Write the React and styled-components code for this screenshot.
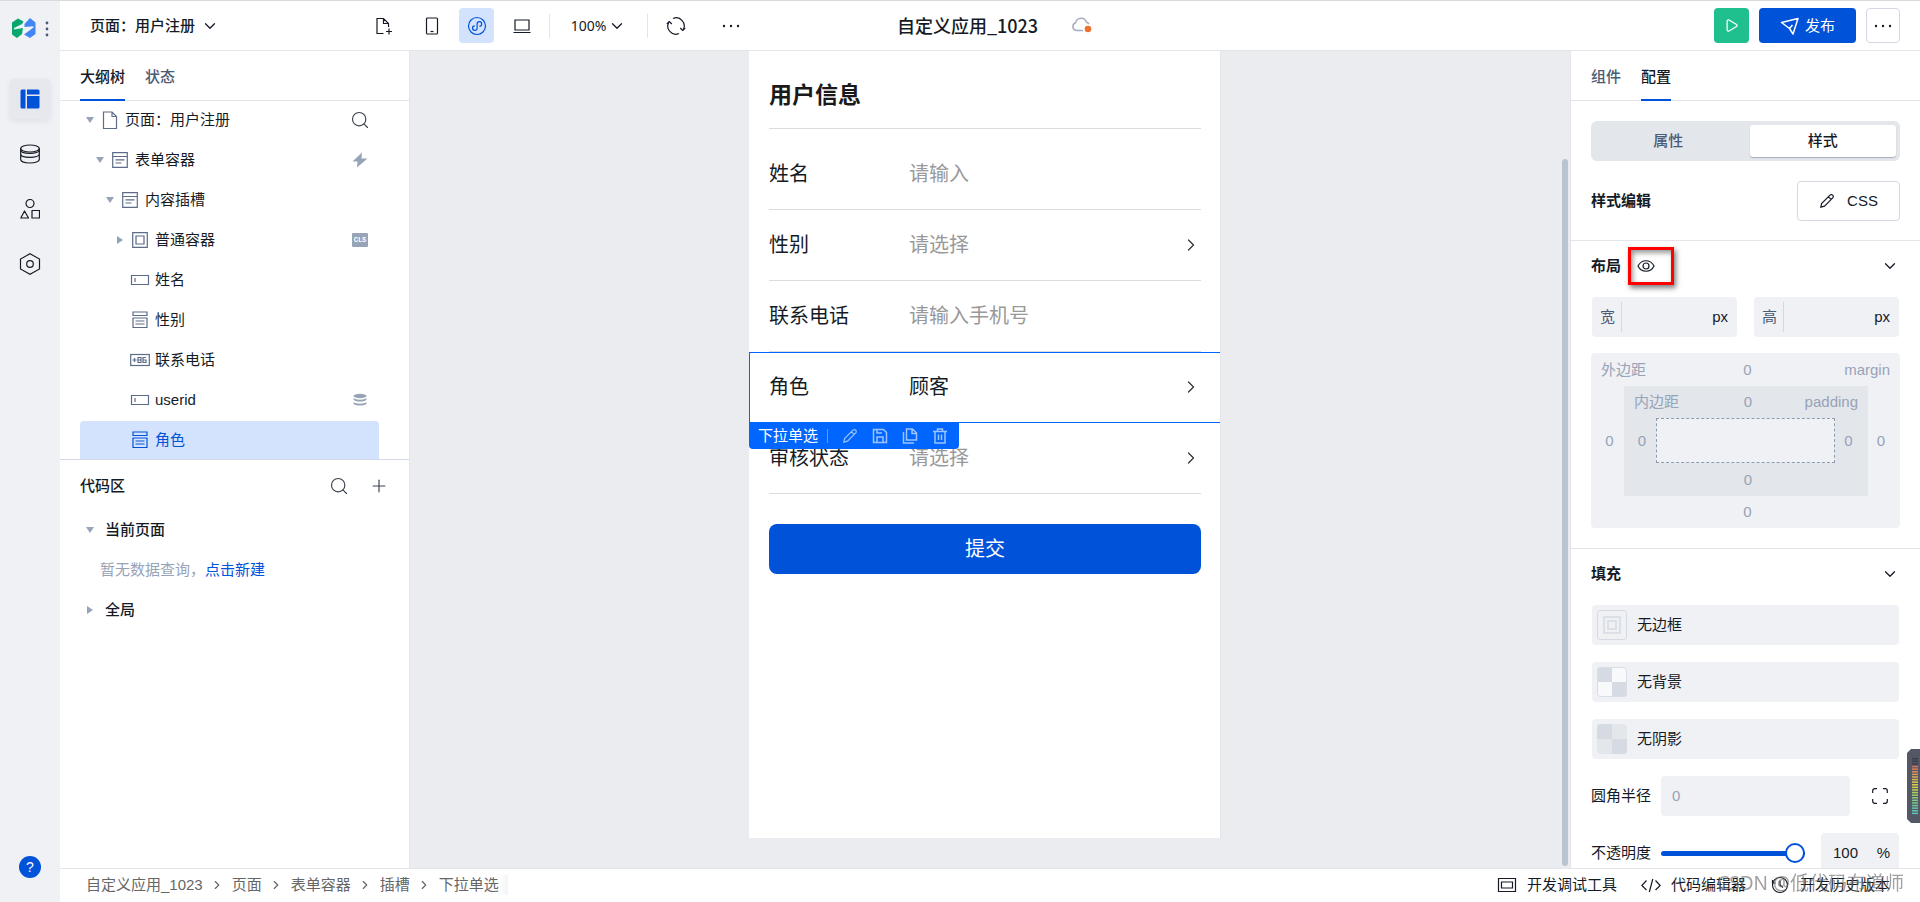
import styled, { createGlobalStyle, css } from 'styled-components';
import { ChevronDown, ChevronRight, Search, Plus, Play } from 'lucide-react';

const GlobalStyle = createGlobalStyle`
  * { box-sizing: border-box; }
  body {
    margin: 0;
    color: #151b26;
    background: #fff;
    font: 15px/20px "Liberation Sans", "Noto Sans CJK SC", sans-serif;
  }
  button, input, select { font: inherit; color: inherit; }
  button { padding: 0; border: 0; background: none; cursor: pointer; }
  ul, ol { margin: 0; padding: 0; list-style: none; }
  h1, h2, h3 { margin: 0; font-size: inherit; }
  a { color: #0052d9; text-decoration: none; }
  svg { display: block; flex: none; }
`;

// ---- Shell ----

const Shell = styled.div`
  display: flex;
  height: 100vh;
  border-top: 1px solid #d9dadd;
  overflow: hidden;
`;

const Main = styled.div`
  flex: 1;
  min-width: 0;
  display: flex;
  flex-direction: column;
`;

const Body = styled.div`
  flex: 1;
  min-height: 0;
  display: flex;
`;

// ---- Left rail ----

const Rail = styled.nav`
  width: 60px;
  padding: 17px 10px 24px;
  display: flex;
  flex-direction: column;
  align-items: center;
  gap: 15px;
  background: #f0f1f5;
`;

const Brand = styled.div`
  width: 100%;
  height: 46px;
  padding-left: 2px;
  display: flex;
  align-items: flex-start;
  gap: 9px;
`;

const RailButton = styled.button`
  width: 40px;
  height: 40px;
  display: grid;
  place-items: center;
  border-radius: 4px;
  ${(p) => p.$active && css`
    background: #e6e8ed;
    box-shadow: 0 2px 6px rgba(21, 27, 38, 0.08);
  `}
`;

const HelpButton = styled.button`
  width: 22px;
  height: 22px;
  margin-top: auto;
  border-radius: 50%;
  background: #0052d9;
  color: #fff;
  font-size: 14px;
`;

// ---- Header ----

const Header = styled.header`
  height: 50px;
  padding: 0 20px 0 30px;
  display: grid;
  grid-template-columns: 1fr auto 1fr;
  align-items: center;
  border-bottom: 1px solid #e3e5eb;
`;

const HeaderLeft = styled.div`
  display: flex;
  align-items: center;
`;

const PageSelect = styled.button`
  width: 274px;
  display: flex;
  align-items: center;
  gap: 6px;
  font-weight: 500;
`;

const Tools = styled.div`
  display: flex;
  align-items: center;
  gap: 10px;
`;

const ToolButton = styled.button`
  width: ${(p) => p.$width || 35}px;
  height: 35px;
  display: grid;
  place-items: center;
  border-radius: 4px;
  color: ${(p) => (p.$active ? '#0052d9' : '#151b26')};
  background: ${(p) => (p.$active ? '#d3e3fd' : 'transparent')};
`;

const Divider = styled.span`
  width: 1px;
  height: 24px;
  background: #e3e5eb;
`;

const ZoomButton = styled.button`
  width: 77px;
  display: flex;
  align-items: center;
  justify-content: center;
  gap: 2px;
  font: 14px/20px "Noto Sans", "Noto Sans CJK SC", sans-serif;
`;

const AppTitle = styled.div`
  padding-bottom: 2px;
  display: flex;
  align-items: center;
  gap: 33px;

  h1 {
    font: 500 18px/24px "Noto Sans CJK SC", sans-serif;
  }
`;

const HeaderRight = styled.div`
  display: flex;
  justify-content: flex-end;
  gap: 10px;
`;

const ActionButton = styled.button`
  width: ${(p) => p.$width || 35}px;
  height: 35px;
  display: flex;
  align-items: center;
  justify-content: center;
  gap: 5px;
  border-radius: 4px;
  color: #fff;
  background: ${(p) => p.$bg};
  ${(p) => p.$outlined && css`
    color: #151b26;
    background: #fff;
    border: 1px solid #d5d8e2;
  `}
`;

// ---- Shared tabs ----

const Tabs = styled.div`
  height: 50px;
  padding: 0 20px;
  display: flex;
  flex: none;
  gap: 20px;
  border-bottom: 1px solid #e3e5eb;
`;

const Tab = styled.button`
  height: 50px;
  padding-top: 4px;
  font-weight: 500;
  color: ${(p) => (p.$active ? '#151b26' : '#4b5b76')};
  border-bottom: 2px solid ${(p) => (p.$active ? '#0052d9' : 'transparent')};
`;

// ---- Outline panel ----

const Outline = styled.aside`
  width: 350px;
  display: flex;
  flex-direction: column;
  border-right: 1px solid #e3e5eb;
`;

const Tree = styled.ul`
  padding: 0 30px 0 20px;
  display: flex;
  flex-direction: column;
  gap: 2px;
  border-bottom: 1px solid #d5d8e8;
`;

const TreeRow = styled.li`
  height: 38px;
  padding: 0 9px 0 ${(p) => p.$level * 10}px;
  display: grid;
  grid-template-columns: 20px 20px 1fr 20px;
  align-items: center;
  justify-items: center;
  border-radius: 4px 4px 0 0;
  color: ${(p) => (p.$active ? '#0052d9' : '#151b26')};
  background: ${(p) => (p.$active ? '#d3e3fd' : 'transparent')};
`;

const TreeIcon = styled.span`
  color: ${(p) => (p.$active ? '#0052d9' : '#5d6c88')};
`;

const TreeLabel = styled.span`
  justify-self: start;
  padding-left: 5px;
`;

const TreeAction = styled.span`
  color: #97a3b7;
`;

const Arrow = styled.span`
  border: 4px solid transparent;
  ${(p) => (p.$open
    ? css`border-top: 6px solid #97a3b7; border-bottom: 0;`
    : css`border-left: 6px solid #97a3b7; border-right: 0;`)}
`;

const CodeHead = styled.div`
  height: 50px;
  padding: 2px 20px 0 20px;
  display: flex;
  align-items: center;
  gap: 20px;

  h2 {
    flex: 1;
    font-weight: 500;
  }
`;

const IconButton = styled.button`
  width: 20px;
  height: 20px;
  display: grid;
  place-items: center;
`;

const CodeRow = styled.div`
  height: 40px;
  padding-left: 20px;
  display: grid;
  grid-template-columns: 20px 1fr;
  align-items: center;
  justify-items: center;

  h3 {
    justify-self: start;
    padding-left: 5px;
    font-weight: 500;
  }
`;

const EmptyHint = styled.p`
  height: 40px;
  margin: 0;
  padding-left: 40px;
  line-height: 40px;
  color: #97a3b7;
`;

// ---- Canvas ----

const Canvas = styled.main`
  flex: 1;
  min-width: 0;
  display: flex;
  background: #ebecf0;
`;

const Stage = styled.div`
  flex: 1;
  padding-bottom: 30px;
  display: flex;
  justify-content: center;
`;

const ScrollTrack = styled.div`
  width: 10px;
  padding: 108px 2px 2px;
  display: flex;
`;

const ScrollThumb = styled.div`
  flex: 1;
  border-radius: 3px;
  background: #bac3d0;
`;

const Phone = styled.form`
  width: 472px;
  padding: 0 19px 0 20px;
  background: #fff;
  border-right: 1px solid #e3e5ea;
`;

const FormTitle = styled.h2`
  height: 78px;
  margin-bottom: 10px;
  padding-top: 10px;
  line-height: 68px;
  font-size: 23px;
  color: #1a1a1a;
  border-bottom: 1px solid #dcdcdc;
`;

const FieldRow = styled.div`
  position: relative;
  height: 71px;
  display: flex;
  align-items: center;
  font-size: 20px;
  line-height: 28px;
  border-bottom: 1px solid #dcdcdc;

  label {
    width: 140px;
  }
`;

const fieldText = css`
  flex: 1;
  min-width: 0;
  padding: 0;
  border: 0;
  outline: 0;
  background: none;
  color: ${(p) => (p.$filled ? '#151b26' : '#999')};
`;

const FieldInput = styled.input`
  ${fieldText}
  &::placeholder { color: #999; }
`;

const FieldSelect = styled.select`
  ${fieldText}
  appearance: none;
`;

const Selection = styled.div`
  position: absolute;
  inset: 0 -19px -1px -20px;
  border: 1px solid #0066ff;
  border-right: 0;
  pointer-events: none;
`;

const SelectionBar = styled.div`
  position: absolute;
  z-index: 1;
  top: 70px;
  left: -20px;
  width: 210px;
  height: 27px;
  padding: 0 11px 0 9px;
  display: flex;
  align-items: center;
  justify-content: space-between;
  font-size: 15px;
  line-height: 20px;
  color: #fff;
  background: #0066ff;
  border-radius: 0 0 4px 4px;
`;

const BarName = styled.span`
  padding-right: 9px;
  border-right: 1px solid #5c9dff;
  line-height: 14px;
`;

const BarButton = styled.button`
  color: #9cc4ff;
`;

const Submit = styled.button`
  width: 100%;
  height: 50px;
  margin-top: 30px;
  border-radius: 8px;
  font-size: 20px;
  color: #fff;
  background: #0052d9;
`;

// ---- Config panel ----

const Config = styled.aside`
  width: 350px;
  display: flex;
  flex-direction: column;
  overflow: hidden;
  border-left: 1px solid #e3e5eb;
`;

const Section = styled.section`
  flex: none;
  padding: ${(p) => (p.$top ? '20px 20px 19px' : '0 20px 20px')};
  display: flex;
  flex-direction: column;
  border-bottom: 1px solid #e3e5eb;
`;

const Segment = styled.div`
  height: 40px;
  margin-bottom: 20px;
  display: flex;
  border-radius: 6px;
  background: #e3e6eb;
`;

const SegmentButton = styled.button`
  flex: 1;
  margin: 4px;
  border-radius: 3px;
  font-weight: 500;
  color: #4b5b76;
  ${(p) => p.$active && css`
    color: #151b26;
    background: #fff;
    box-shadow: 0 1px 1px rgba(75, 91, 118, 0.4);
  `}
`;

const Line = styled.div`
  display: flex;
  align-items: center;
  justify-content: space-between;
`;

const CssButton = styled.button`
  width: 103px;
  height: 40px;
  display: flex;
  align-items: center;
  justify-content: center;
  gap: 12px;
  border: 1px solid #d5d8e2;
  border-radius: 4px;
`;

const SectionHead = styled.div`
  height: 50px;
  display: flex;
  align-items: center;
  margin-bottom: 6px;

  > :last-child {
    margin-left: auto;
  }
`;

const SectionTitle = styled.h3`
  font-weight: 700;
`;

const EyeButton = styled.button`
  width: 46px;
  height: 38px;
  margin-left: 7px;
  padding-left: 6px;
  border: 3px solid #ff0000;
  box-shadow: 2px 3px 5px rgba(0, 0, 0, 0.5), inset 2px 3px 5px rgba(0, 0, 0, 0.4);
`;

const SizeGrid = styled.div`
  padding: 0 1px;
  margin-bottom: 16px;
  display: grid;
  grid-template-columns: 1fr 1fr;
  gap: 17px;
`;

const Box = styled.div`
  height: 40px;
  display: flex;
  align-items: center;
  border-radius: 4px;
  background: #f0f1f5;
`;

const SizeBox = styled(Box)`
  padding: 5px 9px 5px 8px;

  label {
    width: 22px;
    line-height: 30px;
    color: #4b5b76;
    border-right: 1px solid #d5d8e2;
  }
`;

const PlainInput = styled.input`
  flex: 1;
  width: 0;
  min-width: 0;
  padding: 0 8px;
  border: 0;
  outline: 0;
  background: none;
  &::placeholder { color: #97a3b7; }
`;

const BoxModel = styled.div`
  display: grid;
  grid-template-columns: ${(p) => (p.$inner ? '32px 1fr 33px' : '33px 1fr 32px')};
  grid-template-rows: ${(p) => (p.$inner ? '32px 45px 33px' : '33px 110px 32px')};
  align-items: center;
  justify-items: center;
  color: #97a3b7;
  background: ${(p) => (p.$inner ? '#e3e6eb' : '#f0f1f5')};
  border-radius: ${(p) => (p.$inner ? 0 : 4)}px;
  width: 100%;
`;

const BoxModelTop = styled.div`
  grid-column: 1 / -1;
  width: 100%;
  padding: 0 10px;
  display: grid;
  grid-template-columns: 1fr auto 1fr;

  span:last-child {
    text-align: right;
  }
`;

const BoxValue = styled.span`
  grid-column: ${(p) => (p.$wide ? '1 / -1' : 'auto')};
  padding-left: ${(p) => (p.$end ? 0 : 4)}px;
  padding-right: ${(p) => (p.$end ? 6 : 0)}px;
`;

const BoxCore = styled.div`
  width: 100%;
  height: 100%;
  background: #f0f1f5;
  border: 1px dashed #8d9bb3;
`;

const FillList = styled.div`
  display: flex;
  flex-direction: column;
  gap: 17px;
`;

const FillButton = styled.button`
  height: 40px;
  margin: 0 1px;
  padding: 0 5px;
  display: flex;
  align-items: center;
  gap: 10px;
  border-radius: 4px;
  background: #f0f1f5;
`;

const PropRow = styled.div`
  display: flex;
  align-items: center;

  > label {
    width: 70px;
  }
`;

const RadiusBox = styled(Box)`
  flex: 1;
  margin-right: 20px;
  padding: 0 3px;
`;

const CornerButton = styled(IconButton)`
  margin-right: 10px;
`;

const OpacityBox = styled(Box)`
  width: 78px;
  margin-right: 1px;
  padding: 0 9px 0 4px;
`;

const Slider = styled.input`
  appearance: none;
  flex: 1;
  min-width: 0;
  height: 20px;
  margin: 0 16px 0 0;
  background: none;

  &::-webkit-slider-runnable-track {
    height: 5px;
    border-radius: 3px;
    background: #0052d9;
  }

  &::-webkit-slider-thumb {
    appearance: none;
    width: 20px;
    height: 20px;
    margin-top: -8px;
    border: 2px solid #0052d9;
    border-radius: 50%;
    background: #fff;
  }
`;

// ---- Footer ----

const Footer = styled.footer`
  height: 34px;
  padding: 0 30px 2px 26px;
  display: flex;
  align-items: center;
  justify-content: space-between;
  border-top: 1px solid #e3e5eb;
`;

const Crumbs = styled.ol`
  display: flex;
  align-items: center;
  color: #666;

  li {
    display: flex;
    align-items: center;
    gap: 7px;
    padding-right: 8px;
  }

  li:last-child {
    padding-right: 9px;
    background: linear-gradient(to left, #f3f4f7, #fff 9px);
  }

  a {
    color: inherit;
  }
`;

const FooterTools = styled.div`
  display: flex;
  gap: 24px;
`;

const FooterButton = styled.button`
  display: flex;
  align-items: center;
  gap: 10px;
`;

const Watermark = styled.div`
  position: fixed;
  right: 16px;
  bottom: 6px;
  font: 19px/26px "Noto Sans", "Noto Sans CJK SC", sans-serif;
  color: rgba(110, 110, 110, 0.65);
  pointer-events: none;
`;

const Meter = styled.div`
  position: fixed;
  right: 0;
  bottom: 79px;
`;

// ---- Icons ----

function Svg({ size = 20, w = size, h = size, sw = 1.2, children }) {
  return (
    <svg width={w} height={h} viewBox={`0 0 ${w} ${h}`} fill="none" stroke="currentColor" strokeWidth={sw} aria-hidden="true">
      {children}
    </svg>
  );
}

const LogoIcon = () => (
  <svg width="24" height="20" viewBox="0 0 24 20" aria-hidden="true">
    <path d="M0 4.5 6 .5 11.500 3.500 10 6 2 10v1.500l9-1.500-1 6-5 4-5-3.500z" fill="#07a86d" />
    <path d="M12.500 6 18 0l5.500 4.500V16L18 20l-6-3.500 9.500-7V8.300l-9 .7z" fill="#4285f4" />
  </svg>
);

const MoreVertical = () => (
  <svg width="4" height="20" viewBox="0 0 4 20" fill="#4b5b76" aria-hidden="true">
    <circle cx="2" cy="5" r="1.4" /><circle cx="2" cy="11" r="1.4" /><circle cx="2" cy="17" r="1.4" />
  </svg>
);

const DotsIcon = () => (
  <svg width="18" height="4" viewBox="0 0 18 4" fill="currentColor" aria-hidden="true">
    <circle cx="2" cy="2" r="1.2" /><circle cx="9" cy="2" r="1.2" /><circle cx="16" cy="2" r="1.2" />
  </svg>
);

const LayoutIcon = () => (
  <svg width="20" height="20" viewBox="0 0 20 20" fill="#0052d9" aria-hidden="true">
    <path d="M2 .5h3.5v19H2A1.5 1.5 0 0 1 .5 18V2A1.5 1.5 0 0 1 2 .5zM7 .5h11A1.5 1.5 0 0 1 19.500 2v3.500H7zM7 7h12.500v11a1.500 1.500 0 0 1-1.500 1.500H7z" />
  </svg>
);

const DataIcon = () => (
  <Svg>
    <ellipse cx="10" cy="4.5" rx="9.300" ry="3.500" />
    <path d="M.7 4.500v11c0 2 4 3.500 9.300 3.500s9.300-1.500 9.300-3.500v-11M.7 10c0 2 4 3.300 9.300 3.300s9.300-1.300 9.300-3.300" />
    <path d="M.7 6c0 2 4 3.300 9.300 3.300s9.300-1.300 9.300-3.300" />
  </Svg>
);

const ShapesIcon = () => (
  <Svg>
    <circle cx="10" cy="4.5" r="4" />
    <path d="M4.500 12 .8 19h7.700zM12 11.500h7.500V19H12z" strokeLinejoin="round" />
  </Svg>
);

const HexIcon = () => (
  <Svg size={22}>
    <path d="M11 .8 20.500 6v10L11 21.200 1.500 16V6z" />
    <circle cx="11" cy="11" r="3.300" />
  </Svg>
);

const AddPageIcon = () => (
  <Svg>
    <path d="M9.500 17.500H3v-15h6.500l5 5V11M9.500 2.500v5h5M15 12.500v6M12 15.500h6" />
  </Svg>
);

const MobileIcon = () => (
  <Svg>
    <rect x="4.500" y="2" width="11" height="16" rx="1" />
    <path d="M8.500 15.500h3" />
  </Svg>
);

const MiniProgramIcon = () => (
  <Svg>
    <circle cx="10" cy="10" r="8.500" />
    <path d="M7.800 9.800a2.300 2.300 0 1 0 2.300 2.400V7.800a2.300 2.300 0 1 1 2.300 2.400" />
  </Svg>
);

const LaptopIcon = () => (
  <Svg>
    <path d="M3 4h14v10H3zM1.500 16.500h17" />
  </Svg>
);

const RefreshIcon = () => (
  <Svg>
    <path d="M7 2.500a8 8 0 0 1 10 11.500M13 17.500A8 8 0 0 1 3 6" />
    <path d="M.8 8 3.300 5.500 5.800 8M19.200 12l-2.500 2.500L14.200 12" />
  </Svg>
);

const CloudIcon = () => (
  <svg width="22" height="18" viewBox="0 0 22 18" aria-hidden="true">
    <path d="M12 14.500H5.500a4 4 0 0 1-.8-7.800 5.500 5.500 0 0 1 10.700-.5A4 4 0 0 1 18 8" fill="none" stroke="#a3aebf" strokeWidth="1.500" />
    <circle cx="17" cy="13" r="3.300" fill="#ed7230" />
  </svg>
);

const SendIcon = () => (
  <Svg sw={1.5}>
    <path d="M1.500 6.500 18 2.500l-5 15.500-3.500-5.500zM9.500 12.500l3-3.500" strokeLinejoin="round" />
  </Svg>
);

const PageIcon = () => (
  <Svg>
    <path d="M3.500 2h8.500l4.500 4.500V18.500h-13zM12 2v4.500h4.500" />
  </Svg>
);

const FormIcon = () => (
  <Svg>
    <path d="M2.700 2.700h14.600v14.600H2.700zM2.700 6.500h14.600M5.500 9.800h9M5.500 13h6" />
  </Svg>
);

const ContainerIcon = () => (
  <Svg>
    <path d="M2.700 2.700h14.600v14.600H2.700zM6 6h8v8H6z" />
  </Svg>
);

const TextFieldIcon = () => (
  <Svg>
    <path d="M1.500 5.500h17v9h-17zM5 8v4" />
  </Svg>
);

const SelectIcon = () => (
  <Svg>
    <path d="M3 2h14v3.500H3zM3 8h14v9.500H3zM5.500 11h9M5.500 14h9" />
  </Svg>
);

const TelIcon = () => (
  <Svg>
    <rect x=".7" y="4.500" width="18.600" height="11" />
    <path d="M2.500 10h4M4.500 8v4M8 7.500h3v5H8zM8 10h3M16 7.500h-3v5h3V10h-3" />
  </Svg>
);

const BoltIcon = () => (
  <Svg size={16}>
    <path d="M10 .5.500 9.500h5L5 15.500l10.500-9H9.500z" fill="currentColor" stroke="none" />
  </Svg>
);

const ClsTag = styled.span`
  display: block;
  width: 16px;
  height: 14px;
  border-radius: 1px;
  font: 700 7px/14px "Liberation Mono", monospace;
  text-align: center;
  color: #fff;
  background: #97a3b7;
`;

const StackIcon = () => (
  <Svg size={16} sw={0}>
    <ellipse cx="8" cy="4" rx="6.500" ry="2.200" fill="currentColor" />
    <path d="M1.500 6c2 2.200 11 2.200 13 0v1.500c-1 2.700-12 2.700-13 0zM1.500 10c2 2.200 11 2.200 13 0v1.500c-1 2.700-12 2.700-13 0z" fill="currentColor" />
  </Svg>
);

const PencilIcon = () => (
  <Svg size={16}>
    <path d="M1.800 14.200l.8-3.700L11 2.100a1.600 1.600 0 0 1 2.700 2.700L5.500 13.200zM9.500 3.800l2.600 2.600" />
  </Svg>
);

const SaveIcon = () => (
  <Svg size={16} sw={1.5}>
    <path d="M1.500 1.500h10l3 3v10h-13zM5 14V9h6v5M5 2v3h5" />
  </Svg>
);

const CopyIcon = () => (
  <Svg size={16} sw={1.5}>
    <path d="M4.500 1h6l4 4v7h-10zM10 1.500V5.500h4M1.500 4v11H12" />
  </Svg>
);

const TrashIcon = () => (
  <Svg size={16} sw={1.5}>
    <path d="M1 3.500h14M5.500 3V1h5v2M3 4v11h10V4M6.500 6.500v5.500M9.500 6.500v5.500" />
  </Svg>
);

const EyeIcon = () => (
  <Svg w={18} h={14}>
    <path d="M1 7c3.500-7 12.500-7 16 0-3.500 7-12.500 7-16 0z" />
    <circle cx="9" cy="7" r="3" />
  </Svg>
);

const CornersIcon = () => (
  <Svg size={18}>
    <path d="M1.700 6V3.700a2 2 0 0 1 2-2H6M12 1.700h2.300a2 2 0 0 1 2 2V6M16.300 12v2.300a2 2 0 0 1-2 2H12M6 16.300H3.700a2 2 0 0 1-2-2V12" />
  </Svg>
);

const BorderSwatch = () => (
  <Svg size={30} sw={1}>
    <rect x=".5" y=".5" width="29" height="29" rx="3" stroke="#d5d9e1" />
    <path d="M7 7h16v16H7zM11 11h8v8h-8z" stroke="#dbdfe6" strokeWidth="2" />
  </Svg>
);

const CheckerSwatch = ({ light }) => (
  <Svg size={30} sw={1}>
    <rect width="30" height="30" rx="4" fill={light} stroke="none" />
    <path d="M4 0h11v15H0V4a4 4 0 0 1 4-4zM15 15h15v11a4 4 0 0 1-4 4H15z" fill="#d5dae3" stroke="none" />
    <rect x=".5" y=".5" width="29" height="29" rx="3" stroke={light === '#e3e6eb' ? 'none' : '#d9dde5'} />
  </Svg>
);

const DevToolsIcon = () => (
  <Svg>
    <path d="M1.500 3.500h17v13h-17zM4.500 7h11v6h-11z" />
  </Svg>
);

const CodeIcon = () => (
  <Svg>
    <path d="M5.500 5.500.8 10.500l4.700 4.500M14.500 5.500l4.700 5-4.700 4.500M11.800 4 8.300 17" />
  </Svg>
);

const HistoryIcon = () => (
  <Svg>
    <circle cx="10" cy="10" r="7.500" />
    <path d="M10 5.500V10l3 2.500M2.500 5V8h3" />
  </Svg>
);

const meterColors = [
  '#3b3f4a', '#3b3f4a', '#3b3f4a', '#d9705c', '#dd7c5c', '#dc8b58', '#d99a55', '#dcab52', '#dcb94e',
  '#dfc74c', '#d9cf4c', '#cdd350', '#bfd457', '#abd35f', '#9bd069', '#8bcd74', '#7fcb80', '#74ca8d',
  '#6cca99', '#62caa4', '#5ac9ae', '#55c8b5',
];

const MeterIcon = () => (
  <svg width="13" height="74" viewBox="0 0 13 74" aria-hidden="true">
    <path d="M13 0H4L0 4v66l4 4h9z" fill="#545866" />
    {meterColors.map((color, i) => (
      <rect key={i} x="5" y={9 + i * 2.6} width="6" height="1.5" fill={color} />
    ))}
  </svg>
);

// ---- Data ----

const treeItems = [
  { label: '页面：用户注册', level: 0, icon: PageIcon, open: true, action: <Search size={20} strokeWidth={1.4} color="#3c4350" /> },
  { label: '表单容器', level: 1, icon: FormIcon, open: true, action: <BoltIcon /> },
  { label: '内容插槽', level: 2, icon: FormIcon, open: true },
  { label: '普通容器', level: 3, icon: ContainerIcon, open: false, action: <ClsTag>CLS</ClsTag> },
  { label: '姓名', level: 3, icon: TextFieldIcon },
  { label: '性别', level: 3, icon: SelectIcon },
  { label: '联系电话', level: 3, icon: TelIcon },
  { label: 'userid', level: 3, icon: TextFieldIcon, action: <StackIcon /> },
  { label: '角色', level: 3, icon: SelectIcon, active: true },
];

const fields = [
  { id: 'name', label: '姓名', hint: '请输入' },
  { id: 'gender', label: '性别', hint: '请选择', select: true },
  { id: 'phone', label: '联系电话', hint: '请输入手机号' },
  { id: 'role', label: '角色', hint: '顾客', select: true, filled: true, selected: true },
  { id: 'status', label: '审核状态', hint: '请选择', select: true },
];

const crumbs = ['自定义应用_1023', '页面', '表单容器', '插槽', '下拉单选'];

const DownArrow = () => <ChevronDown size={18} strokeWidth={1.7} />;

// ---- Parts ----

function SideRail() {
  return (
    <Rail>
      <Brand>
        <LogoIcon />
        <MoreVertical />
      </Brand>
      <RailButton $active aria-label="布局"><LayoutIcon /></RailButton>
      <RailButton aria-label="数据源"><DataIcon /></RailButton>
      <RailButton aria-label="素材"><ShapesIcon /></RailButton>
      <RailButton aria-label="设置"><HexIcon /></RailButton>
      <HelpButton>?</HelpButton>
    </Rail>
  );
}

function TopBar() {
  return (
    <Header>
      <HeaderLeft>
        <PageSelect>页面：用户注册 <DownArrow /></PageSelect>
        <Tools>
          <ToolButton $width={40} aria-label="新建页面"><AddPageIcon /></ToolButton>
          <ToolButton aria-label="手机"><MobileIcon /></ToolButton>
          <ToolButton $active aria-label="小程序"><MiniProgramIcon /></ToolButton>
          <ToolButton aria-label="电脑"><LaptopIcon /></ToolButton>
          <Divider />
          <ZoomButton>100% <DownArrow /></ZoomButton>
          <Divider />
          <ToolButton aria-label="刷新"><RefreshIcon /></ToolButton>
          <ToolButton $width={55} aria-label="更多"><DotsIcon /></ToolButton>
        </Tools>
      </HeaderLeft>
      <AppTitle>
        <h1>自定义应用_1023</h1>
        <CloudIcon />
      </AppTitle>
      <HeaderRight>
        <ActionButton $bg="#1fc08e" aria-label="预览"><Play size={15} strokeWidth={2} /></ActionButton>
        <ActionButton $bg="#0052d9" $width={97}><SendIcon />发布</ActionButton>
        <ActionButton $outlined $width={34} aria-label="更多"><DotsIcon /></ActionButton>
      </HeaderRight>
    </Header>
  );
}

function OutlinePanel() {
  return (
    <Outline>
      <Tabs>
        <Tab $active>大纲树</Tab>
        <Tab>状态</Tab>
      </Tabs>
      <Tree>
        {treeItems.map(({ label, level, icon: ItemIcon, open, action, active }) => (
          <TreeRow key={label} $level={level} $active={active}>
            {open === undefined ? <span /> : <Arrow $open={open} />}
            <TreeIcon $active={active}><ItemIcon /></TreeIcon>
            <TreeLabel>{label}</TreeLabel>
            <TreeAction>{action}</TreeAction>
          </TreeRow>
        ))}
      </Tree>
      <CodeHead>
        <h2>代码区</h2>
        <IconButton aria-label="搜索"><Search size={20} strokeWidth={1.4} color="#3c4350" /></IconButton>
        <IconButton aria-label="新建"><Plus size={20} strokeWidth={1.4} color="#3c4350" /></IconButton>
      </CodeHead>
      <CodeRow><Arrow $open /><h3>当前页面</h3></CodeRow>
      <EmptyHint>暂无数据查询，<a href="#new">点击新建</a></EmptyHint>
      <CodeRow><Arrow /><h3>全局</h3></CodeRow>
    </Outline>
  );
}

function FormField({ id, label, hint, select, filled, selected }) {
  return (
    <FieldRow>
      <label htmlFor={id}>{label}</label>
      {select ? (
        <FieldSelect id={id} $filled={filled}><option>{hint}</option></FieldSelect>
      ) : (
        <FieldInput id={id} placeholder={hint} />
      )}
      {select && <ChevronRight size={20} strokeWidth={1.5} color="#333" />}
      {selected && (
        <>
          <Selection />
          <SelectionBar>
            <BarName>下拉单选</BarName>
            <BarButton type="button" aria-label="编辑"><PencilIcon /></BarButton>
            <BarButton type="button" aria-label="保存"><SaveIcon /></BarButton>
            <BarButton type="button" aria-label="复制"><CopyIcon /></BarButton>
            <BarButton type="button" aria-label="删除"><TrashIcon /></BarButton>
          </SelectionBar>
        </>
      )}
    </FieldRow>
  );
}

function FormCanvas() {
  return (
    <Canvas>
      <Stage>
        <Phone>
          <FormTitle>用户信息</FormTitle>
          {fields.map((field) => <FormField key={field.id} {...field} />)}
          <Submit type="button">提交</Submit>
        </Phone>
      </Stage>
      <ScrollTrack><ScrollThumb /></ScrollTrack>
    </Canvas>
  );
}

function ConfigPanel() {
  return (
    <Config>
      <Tabs>
        <Tab>组件</Tab>
        <Tab $active>配置</Tab>
      </Tabs>
      <Section $top>
        <Segment>
          <SegmentButton>属性</SegmentButton>
          <SegmentButton $active>样式</SegmentButton>
        </Segment>
        <Line>
          <SectionTitle>样式编辑</SectionTitle>
          <CssButton><PencilIcon />CSS</CssButton>
        </Line>
      </Section>
      <Section>
        <SectionHead>
          <SectionTitle>布局</SectionTitle>
          <EyeButton aria-label="显示"><EyeIcon /></EyeButton>
          <IconButton aria-label="收起"><DownArrow /></IconButton>
        </SectionHead>
        <SizeGrid>
          <SizeBox><label htmlFor="width">宽</label><PlainInput id="width" />px</SizeBox>
          <SizeBox><label htmlFor="height">高</label><PlainInput id="height" />px</SizeBox>
        </SizeGrid>
        <BoxModel>
          <BoxModelTop><span>外边距</span><BoxValue>0</BoxValue><span>margin</span></BoxModelTop>
          <BoxValue>0</BoxValue>
          <BoxModel $inner>
            <BoxModelTop><span>内边距</span><BoxValue>0</BoxValue><span>padding</span></BoxModelTop>
            <BoxValue>0</BoxValue>
            <BoxCore />
            <BoxValue $end>0</BoxValue>
            <BoxValue $wide>0</BoxValue>
          </BoxModel>
          <BoxValue $end>0</BoxValue>
          <BoxValue $wide>0</BoxValue>
        </BoxModel>
      </Section>
      <Section>
        <SectionHead>
          <SectionTitle>填充</SectionTitle>
          <IconButton aria-label="收起"><DownArrow /></IconButton>
        </SectionHead>
        <FillList>
          <FillButton><BorderSwatch />无边框</FillButton>
          <FillButton><CheckerSwatch light="#f8f9fb" />无背景</FillButton>
          <FillButton><CheckerSwatch light="#e3e6eb" />无阴影</FillButton>
          <PropRow>
            <label htmlFor="radius">圆角半径</label>
            <RadiusBox><PlainInput id="radius" placeholder="0" /></RadiusBox>
            <CornerButton aria-label="四角"><CornersIcon /></CornerButton>
          </PropRow>
          <PropRow>
            <label htmlFor="opacity">不透明度</label>
            <Slider id="opacity" type="range" defaultValue={100} />
            <OpacityBox><PlainInput aria-label="不透明度数值" defaultValue="100" />%</OpacityBox>
          </PropRow>
        </FillList>
      </Section>
    </Config>
  );
}

function BottomBar() {
  return (
    <Footer>
      <Crumbs>
        {crumbs.map((crumb, i) => (
          <li key={crumb}>
            <a href="#crumb">{crumb}</a>
            {i < crumbs.length - 1 && <ChevronRight size={14} strokeWidth={2} />}
          </li>
        ))}
      </Crumbs>
      <FooterTools>
        <FooterButton><DevToolsIcon />开发调试工具</FooterButton>
        <FooterButton><CodeIcon />代码编辑器</FooterButton>
        <FooterButton><HistoryIcon />开发历史版本</FooterButton>
      </FooterTools>
    </Footer>
  );
}

function App() {
  return (
    <>
      <GlobalStyle />
      <Shell>
        <SideRail />
        <Main>
          <TopBar />
          <Body>
            <OutlinePanel />
            <FormCanvas />
            <ConfigPanel />
          </Body>
          <BottomBar />
        </Main>
      </Shell>
      <Meter><MeterIcon /></Meter>
      <Watermark>CSDN @低代码布道师</Watermark>
    </>
  );
}

export default App;
